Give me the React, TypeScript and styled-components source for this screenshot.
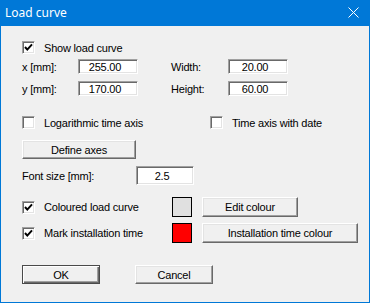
import styled, { createGlobalStyle } from 'styled-components';

const Global = createGlobalStyle`
    html, body {
        margin: 0;
        padding: 0;
        background: #ffffff;
    }
    * {
        box-sizing: border-box;
    }
`;

// window frame ---------------->
const Window = styled.div`
    width: 370px;
    height: 303px;
    display: flex;
    flex-direction: column;
    border: 1px solid #0078d7;
    border-top: none;
    background: #f0f0f0;
    font-family: 'Liberation Sans', Arial, sans-serif;
    font-size: 11px;
    letter-spacing: -0.2px;
    color: #000;
`;
const TitleBar = styled.div`
    height: 26px;
    margin: 0 -1px;
    background: #0078d7;
    display: flex;
    align-items: center;
    justify-content: space-between;
    padding: 0 11px 1px 5px;
    color: #fff;
    font-family: 'Noto Sans', 'Open Sans', sans-serif;
    font-size: 12px;
    letter-spacing: 0;
`;
const Body = styled.div`
    flex: 1;
    padding: 15px 0 0 21px;
    display: flex;
    flex-direction: column;
`;

// rows ---------------->
const Row = styled.div<{ $top: number; $h: number }>`
    display: flex;
    align-items: center;
    margin-top: ${(p) => p.$top}px;
    height: ${(p) => p.$h}px;
`;
const FieldGrid = styled.div`
    display: grid;
    grid-template-columns: 56px 60px 33px 57px 60px;
    grid-auto-rows: 15px;
    row-gap: 7px;
    align-items: center;
    margin-top: 5px;
`;
const Label = styled.span<{ $w?: number }>`
    display: inline-block;
    width: ${(p) => (p.$w ? `${p.$w}px` : 'auto')};
    white-space: nowrap;
`;
const CheckItem = styled.label<{ $w?: number }>`
    display: flex;
    align-items: center;
    gap: 9px;
    width: ${(p) => (p.$w ? `${p.$w}px` : 'auto')};
    white-space: nowrap;
`;
const Box = styled.span`
    width: 13px;
    height: 13px;
    flex: none;
    display: flex;
    align-items: center;
    justify-content: center;
    background: #fff;
    border: 1px solid;
    border-color: #a0a0a0 #fff #fff #a0a0a0;
    box-shadow: inset 1px 1px 0 #696969, inset -1px -1px 0 #e3e3e3;
`;
const Field = styled.input<{ $w: number; $h: number }>`
    width: ${(p) => p.$w}px;
    height: ${(p) => p.$h}px;
    padding: 0 6px 0 0;
    background: #fff;
    border: 1px solid;
    border-color: #a0a0a0 #fff #fff #a0a0a0;
    box-shadow: inset 1px 1px 0 #696969, inset -1px -1px 0 #e3e3e3;
    font-family: inherit;
    font-size: 11px;
    letter-spacing: inherit;
    color: #000;
    text-align: center;
    outline: none;
`;
const Button = styled.button<{ $w: number; $h: number; $default?: boolean; $left?: number }>`
    width: ${(p) => p.$w}px;
    height: ${(p) => p.$h}px;
    margin-left: ${(p) => p.$left ?? 0}px;
    padding: 0;
    background: #f0f0f0;
    border: 1px solid;
    border-color: ${(p) => (p.$default ? '#4a4a4a' : '#fff #696969 #696969 #fff')};
    box-shadow: ${(p) =>
        p.$default
            ? 'inset 1px 1px 0 #fff, inset -1px -1px 0 #696969, inset -2px -2px 0 #a0a0a0'
            : 'inset -1px -1px 0 #a0a0a0, inset 1px 1px 0 #e3e3e3'};
    font-family: inherit;
    font-size: 11px;
    letter-spacing: inherit;
    color: #000;
    flex: none;
`;
const Swatch = styled.span<{ $fill: string }>`
    width: 20px;
    height: 20px;
    flex: none;
    background: ${(p) => p.$fill};
    border: 1px solid #000;
`;
const ColourRow = styled.div<{ $top: number }>`
    display: flex;
    align-items: center;
    height: 20px;
    margin-top: ${(p) => p.$top}px;
`;

function Check({ on }: { on?: boolean }) {
    return (
        <Box>
            {on && (
                <svg width="9" height="9" viewBox="0 0 9 9">
                    <path d="M1 4 L3.3 6.6 L8 1.4" fill="none" stroke="#000" strokeWidth="2" />
                </svg>
            )}
        </Box>
    );
}

export default function App() {
    return (
        <>
            <Global />
            <Window>
                <TitleBar>
                    <span>Load curve</span>
                    <svg width="11" height="11" viewBox="0 0 11 11">
                        <path d="M0.5 0.5 L10.5 10.5 M10.5 0.5 L0.5 10.5" stroke="#fff" strokeWidth="1" />
                    </svg>
                </TitleBar>
                <Body>
                    <Row $top={0} $h={13}>
                        <CheckItem>
                            <Check on />
                            Show load curve
                        </CheckItem>
                    </Row>
                    <FieldGrid>
                        <Label>x [mm]:</Label>
                        <Field $w={60} $h={15} defaultValue="255.00" />
                        <span />
                        <Label>Width:</Label>
                        <Field $w={60} $h={15} defaultValue="20.00" />
                        <Label>y [mm]:</Label>
                        <Field $w={60} $h={15} defaultValue="170.00" />
                        <span />
                        <Label>Height:</Label>
                        <Field $w={60} $h={15} defaultValue="60.00" />
                    </FieldGrid>
                    <Row $top={20} $h={13}>
                        <CheckItem $w={188}>
                            <Check />
                            Logarithmic time axis
                        </CheckItem>
                        <CheckItem>
                            <Check />
                            Time axis with date
                        </CheckItem>
                    </Row>
                    <Row $top={11} $h={19}>
                        <Button $w={114} $h={19}>Define axes</Button>
                    </Row>
                    <Row $top={7} $h={19}>
                        <Label $w={114}>Font size [mm]:</Label>
                        <Field $w={58} $h={19} defaultValue="2.5" />
                    </Row>
                    <ColourRow $top={12}>
                        <CheckItem $w={150}>
                            <Check on />
                            Coloured load curve
                        </CheckItem>
                        <Swatch $fill="#e0e0e0" />
                        <Button $w={96} $h={20} $left={10}>
                            Edit colour
                        </Button>
                    </ColourRow>
                    <ColourRow $top={6}>
                        <CheckItem $w={150}>
                            <Check on />
                            Mark installation time
                        </CheckItem>
                        <Swatch $fill="#ff0000" />
                        <Button $w={156} $h={20} $left={10}>
                            Installation time colour
                        </Button>
                    </ColourRow>
                    <Row $top={22} $h={19}>
                        <Button $default $w={78} $h={19}>OK</Button>
                        <Button $w={78} $h={19} $left={35}>
                            Cancel
                        </Button>
                    </Row>
                </Body>
            </Window>
        </>
    );
}
